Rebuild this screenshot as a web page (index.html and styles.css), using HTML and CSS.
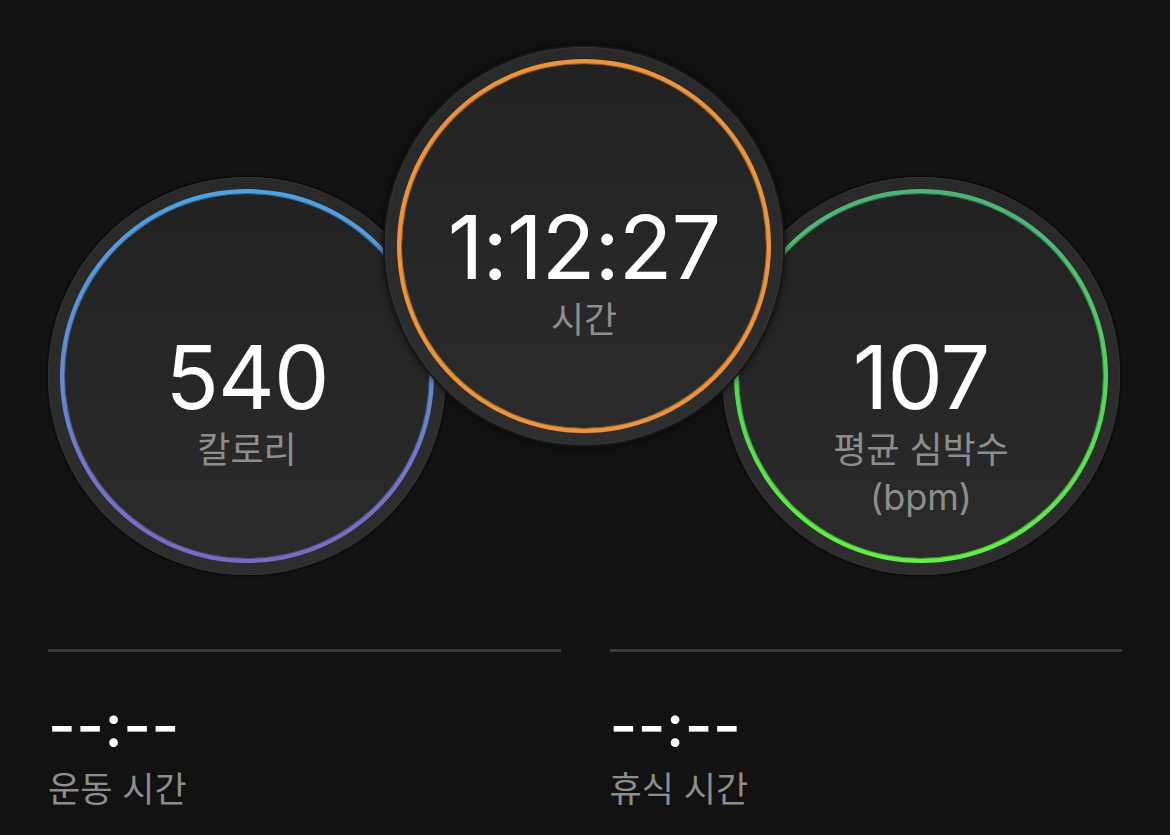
FILE: index.html
```html
<!DOCTYPE html>
<html lang="ko">
<head>
    <meta charset="UTF-8">
    <meta name="viewport" content="width=device-width, initial-scale=1.0">
    <title>운동 요약</title>
    <link rel="stylesheet" href="styles.css">
</head>
<body>
    <div class="summary">
        <div class="rings">
            <div class="ring ring-side">
                <div class="track track-calories">
                    <div class="face">
                        <div class="value">540</div>
                        <div class="label">칼로리</div>
                    </div>
                </div>
            </div>
            <div class="ring ring-main">
                <div class="track track-time">
                    <div class="face">
                        <div class="value">1:12:27</div>
                        <div class="label">시간</div>
                    </div>
                </div>
            </div>
            <div class="ring ring-side">
                <div class="track track-heart">
                    <div class="face">
                        <div class="value">107</div>
                        <div class="label">평균 심박수<br>(bpm)</div>
                    </div>
                </div>
            </div>
        </div>

        <div class="stats">
            <div class="stat">
                <div class="stat-value">--:--</div>
                <div class="stat-label">운동 시간</div>
            </div>
            <div class="stat">
                <div class="stat-value">--:--</div>
                <div class="stat-label">휴식 시간</div>
            </div>
        </div>
    </div>
</body>
</html>
```

FILE: styles.css
```css
* {
    margin: 0;
    padding: 0;
    box-sizing: border-box;
}

body {
    background-color: #121212;
    color: #ffffff;
    font-family: Inter, "Noto Sans CJK KR", sans-serif;
    width: 1170px;
    height: 835px;
    overflow: hidden;
}

.summary {
    padding: 47px 48px 0;
}

.rings {
    display: flex;
    align-items: flex-start;
}

.ring {
    width: 398px;
    height: 398px;
    flex: 0 0 398px;
    border-radius: 50%;
    padding: 12px;
    background: linear-gradient(180deg, #292929, #2e2e2e);
    box-shadow: inset 0 0 0 1px #333333, 0 0 3px 1px rgba(0, 0, 0, 0.6);
}

.ring + .ring {
    margin-left: -61px;
}

.ring-side {
    margin-top: 130px;
}

.ring-main {
    position: relative;
    z-index: 2;
    box-shadow: inset 0 0 0 1px #363636, 0 0 0 2px #171717, 0 0 6px 3px rgba(0, 0, 0, 0.55);
}

.track {
    width: 100%;
    height: 100%;
    border-radius: 50%;
    padding: 5px;
}

.track-calories {
    background: linear-gradient(180deg, #4ea2e2 0%, #6686d0 55%, #7c68c0 100%);
}

.track-time {
    background: #ec943c;
}

.track-heart {
    background: linear-gradient(180deg, #4cb279 0%, #55d65a 55%, #63f043 100%);
}

.face {
    width: 100%;
    height: 100%;
    border-radius: 50%;
    background: linear-gradient(180deg, #222222, #2b2b2b);
    box-shadow: 0 0 0 1px rgba(0, 0, 0, 0.35);
    display: flex;
    flex-direction: column;
    align-items: center;
    padding-top: 139px;
    text-align: center;
}

.value {
    font-size: 88px;
    line-height: 1;
    font-weight: 400;
    letter-spacing: -1px;
    color: #ffffff;
}

.label {
    margin-top: 6px;
    font-size: 36px;
    line-height: 1.3;
    color: #8d8d8d;
}

.stats {
    display: flex;
    gap: 49px;
    margin-top: 74px;
}

.stat {
    flex: 1;
    border-top: 3px solid #3a3a3a;
    padding-top: 43px;
}

.stat-value {
    font-size: 60px;
    line-height: 1;
    font-weight: 500;
    letter-spacing: 0.5px;
    color: #ffffff;
}

.stat-label {
    margin-top: 13px;
    font-size: 35px;
    line-height: 1.2;
    color: #8d8d8d;
}
```
